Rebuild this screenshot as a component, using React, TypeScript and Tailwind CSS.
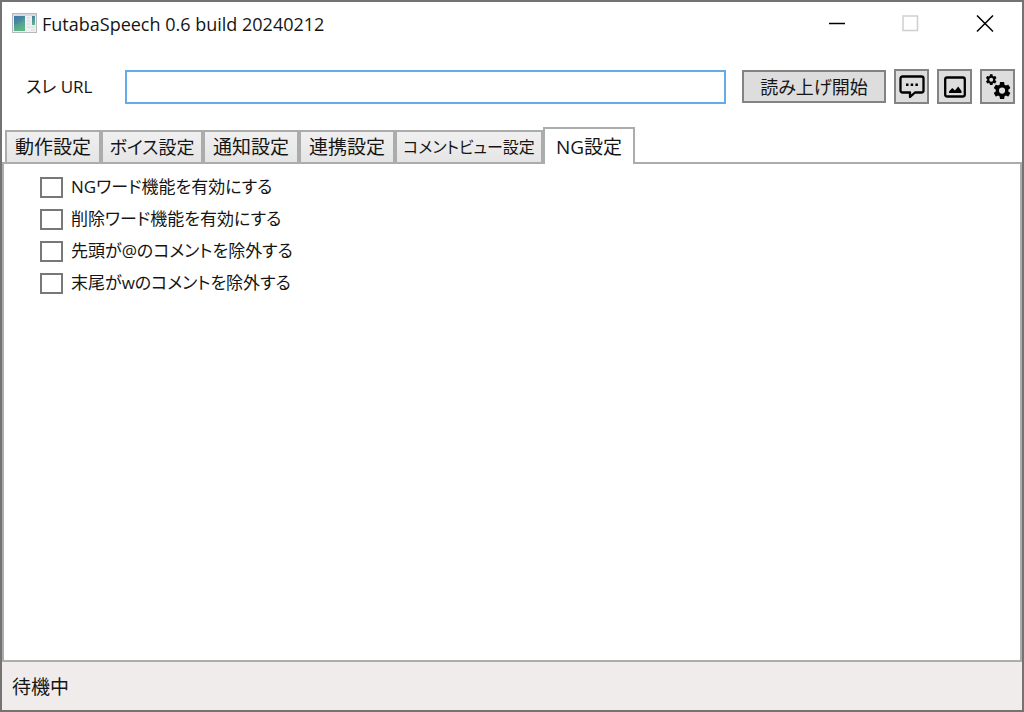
import React, { useState } from "react";

const tabs = [
  { name: "動作設定", style: "w-24 text-[19px]" },
  { name: "ボイス設定", style: "w-[102px] text-[18px]" },
  { name: "通知設定", style: "w-24 text-[19px]" },
  { name: "連携設定", style: "w-24 text-[19px]" },
  { name: "コメントビュー設定", style: "w-[148px] text-base" },
  { name: "NG設定", style: "w-[92px] text-[19px]" },
];

const ngOptions = [
  "NGワード機能を有効にする",
  "削除ワード機能を有効にする",
  "先頭が@のコメントを除外する",
  "末尾がwのコメントを除外する",
];

const AppIcon = () => (
  <svg width="26" height="22" viewBox="0 0 26 22">
    <defs>
      <linearGradient id="pane" x1="0" y1="0" x2="0.4" y2="1">
        <stop offset="0" stopColor="#4379aa" />
        <stop offset="1" stopColor="#5db585" />
      </linearGradient>
    </defs>
    <rect x="0.5" y="0.5" width="24" height="19" fill="#eef0f3" stroke="#b4b9c0" />
    <rect x="1" y="1" width="23" height="2" fill="#d5dae1" />
    <rect x="2" y="3" width="11" height="15" fill="url(#pane)" />
    <path d="M2 12C6 11 10 8 13 4V3H2Z" fill="#3d6fa8" opacity="0.3" />
    <path d="M15 5h3M15 8h3M15 11h3M15 14h3M19 14h4M19 17h4" stroke="#d3d6da" />
    <rect x="20" y="3" width="3" height="9" fill="url(#pane)" />
  </svg>
);

const CommentIcon = () => (
  <svg width="28" height="28" viewBox="0 0 28 28">
    <path
      d="M4.500 3.500h19a2 2 0 0 1 2 2v12a2 2 0 0 1-2 2h-6.500l-5 4.500v-4.500h-7.500a2 2 0 0 1-2-2v-12a2 2 0 0 1 2-2z"
      fill="none"
      stroke="#000"
      strokeWidth="2.300"
      strokeLinejoin="round"
    />
    <path d="M8 10.500h2.500v2.500H8zM12.700 10.500h2.500v2.500h-2.500zM17.400 10.500h2.500v2.500h-2.500z" />
  </svg>
);

const ImageIcon = () => (
  <svg width="28" height="28" viewBox="0 0 28 28">
    <rect x="4.200" y="4.500" width="19.600" height="19" rx="2" fill="none" stroke="#000" strokeWidth="2.300" />
    <path d="M8 20v-1.500l3.200-3.500 2.800 2.500 3.200-4 3.300 4.500V20z" />
  </svg>
);

const gear =
  "M19.140 12.940c.04-.3.06-.61.06-.94 0-.32-.02-.64-.07-.94l2.030-1.580c.18-.14.23-.41.12-.61l-1.920-3.320c-.12-.22-.37-.29-.59-.22l-2.390.96c-.5-.38-1.030-.7-1.620-.94l-.36-2.540c-.04-.24-.24-.41-.48-.41h-3.840c-.24 0-.43.17-.47.41l-.36 2.540c-.59.24-1.130.57-1.620.94l-2.390-.96c-.22-.08-.47 0-.59.22L2.740 8.870c-.12.21-.08.47.12.61l2.030 1.580c-.05.3-.09.63-.09.94s.02.64.07.94l-2.030 1.580c-.18.14-.23.41-.12.61l1.920 3.320c.12.22.37.29.59.22l2.390-.96c.5.38 1.030.7 1.620.94l.36 2.540c.05.24.24.41.48.41h3.840c.24 0 .44-.17.47-.41l.36-2.540c.59-.24 1.130-.56 1.620-.94l2.390.96c.22.08.47 0 .59-.22l1.920-3.320c.12-.22.07-.47-.12-.61l-2.010-1.580zM12 15.500a3.500 3.500 0 1 1 0-7 3.500 3.500 0 0 1 0 7z";

const GearsIcon = () => (
  <svg width="31" height="31" viewBox="0 0 31 31">
    <g fillRule="evenodd">
      <path d={gear} transform="translate(2.500 2) scale(0.560)" />
      <path d={gear} transform="translate(9.500 9) scale(0.880)" />
    </g>
  </svg>
);

const toolButton = "flex size-[35px] shrink-0 items-center justify-center border-2 border-[#838383] bg-[#dddddd]";

const App = () => {
  const [active, setActive] = useState("NG設定");
  const [url, setUrl] = useState("");

  return (
    <div className="flex min-h-screen flex-col border-2 border-[#747273] bg-white font-['Open_Sans','Noto_Sans_CJK_JP',sans-serif] text-[19px] leading-6 text-[#151515] [font-feature-settings:'palt']">
      <header className="flex h-11 shrink-0 items-center pl-2.5">
        <AppIcon />
        <h1 className="ml-1 text-[18px]">FutabaSpeech 0.6 build 20240212</h1>
        <div className="ml-auto flex items-center gap-14 pr-7">
          <button aria-label="最小化">
            <svg width="18" height="18" viewBox="0 0 18 18">
              <path d="M1 8.500h16" stroke="#000" strokeWidth="1.500" />
            </svg>
          </button>
          <button aria-label="最大化" disabled>
            <svg width="18" height="18" viewBox="0 0 18 18">
              <rect x="1" y="1" width="14.500" height="14.500" fill="none" stroke="#cfcfcf" strokeWidth="1.500" />
            </svg>
          </button>
          <button aria-label="閉じる">
            <svg width="18" height="18" viewBox="0 0 18 18">
              <path d="M1 0.500l16 16M17 0.500L1 16.500" stroke="#000" strokeWidth="1.500" />
            </svg>
          </button>
        </div>
      </header>

      <div className="mt-[23px] flex shrink-0 items-center pr-[7px] pl-6">
        <label htmlFor="url" className="w-[99px] text-[17px]">
          スレ URL
        </label>
        <input
          id="url"
          value={url}
          onChange={(e) => setUrl(e.target.value)}
          className="h-[34px] min-w-0 flex-1 border-2 border-[#67aaea] bg-white px-1 outline-none"
        />
        <button className="ml-4 h-[33px] w-36 border-2 border-[#838383] bg-[#dddddd] text-[18px]">読み上げ開始</button>
        <div className="ml-2 flex gap-2">
          <button aria-label="コメント" className={toolButton}>
            <CommentIcon />
          </button>
          <button aria-label="画像" className={toolButton}>
            <ImageIcon />
          </button>
          <button aria-label="設定" className={toolButton}>
            <GearsIcon />
          </button>
        </div>
      </div>

      <div role="tablist" className="z-10 -mb-0.5 mt-[23px] flex shrink-0 items-end pl-[3px]">
        {tabs.map((tab) => (
          <button
            key={tab.name}
            role="tab"
            aria-selected={active === tab.name}
            onClick={() => setActive(tab.name)}
            className={`${tab.style} whitespace-nowrap border-2 border-[#acacac] ${
              active === tab.name
                ? "h-[37px] border-b-0 bg-white"
                : "h-[34px] bg-linear-to-b from-[#f0f0f0] to-[#e5e5e5]"
            }`}
          >
            {tab.name}
          </button>
        ))}
      </div>

      <main className="flex-1 border-2 border-[#acacac] bg-white pt-[7px] pl-9 text-[17px]">
        {ngOptions.map((option) => (
          <label key={option} className="flex h-8 w-fit items-center gap-2">
            <input type="checkbox" className="h-[21px] w-[23px] appearance-none border-2 border-[#787878] bg-white checked:bg-[#787878]" />
            {option}
          </label>
        ))}
      </main>

      <footer className="flex h-12 shrink-0 items-center bg-[#f0eceb] pt-0.5 pl-2.5">待機中</footer>
    </div>
  );
};

export default App;
